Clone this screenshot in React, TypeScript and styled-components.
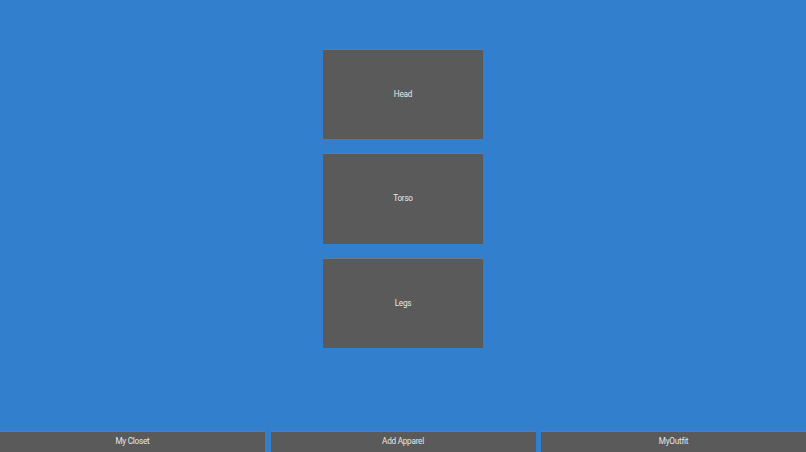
import styled, { createGlobalStyle } from 'styled-components';

const GlobalStyle = createGlobalStyle`
  html, body {
    margin: 0;
    padding: 0;
    background: #3280cd;
  }
  #root {
    height: 100vh;
  }
`;

const Screen = styled.div`
  height: 100vh;
  width: 100vw;
  background-color: #3280cd;
  display: flex;
  flex-direction: column;
  font-family: Roboto, "Liberation Sans", sans-serif;
`;

const Body = styled.div`
  flex: 1;
  display: flex;
  flex-direction: column;
  align-items: center;
  gap: 14px;
  padding-top: 48.5px;
`;

const SlotCard = styled.button`
  width: 160px;
  height: 90.5px;
  background: #5a5a5a;
  border: none;
  border-top: 1px solid #6b7a8a;
  color: #e6e6e6;
  font-family: inherit;
  font-size: 8.2px;
  letter-spacing: -0.25px;
  padding: 0 0 1px 0;
  cursor: pointer;
`;

const BottomBar = styled.div`
  display: flex;
  gap: 5.5px;
  height: 21px;
`;

const BarButton = styled.button`
  flex: 1;
  background: #5a5a5a;
  border: none;
  border-top: 1px solid #6b7a8a;
  color: #e6e6e6;
  font-family: inherit;
  font-size: 8.2px;
  letter-spacing: -0.25px;
  padding: 0 0 1.5px 0;
  cursor: pointer;
`;

const slots = ['Head', 'Torso', 'Legs'];
const tabs = ['My Closet', 'Add Apparel', 'MyOutfit'];

export default function App() {
  return (
    <Screen>
      <GlobalStyle />
      <Body>
        {slots.map(slot => (
          <SlotCard key={slot}>{slot}</SlotCard>
        ))}
      </Body>
      <BottomBar>
        {tabs.map(tab => (
          <BarButton key={tab}>{tab}</BarButton>
        ))}
      </BottomBar>
    </Screen>
  );
}
